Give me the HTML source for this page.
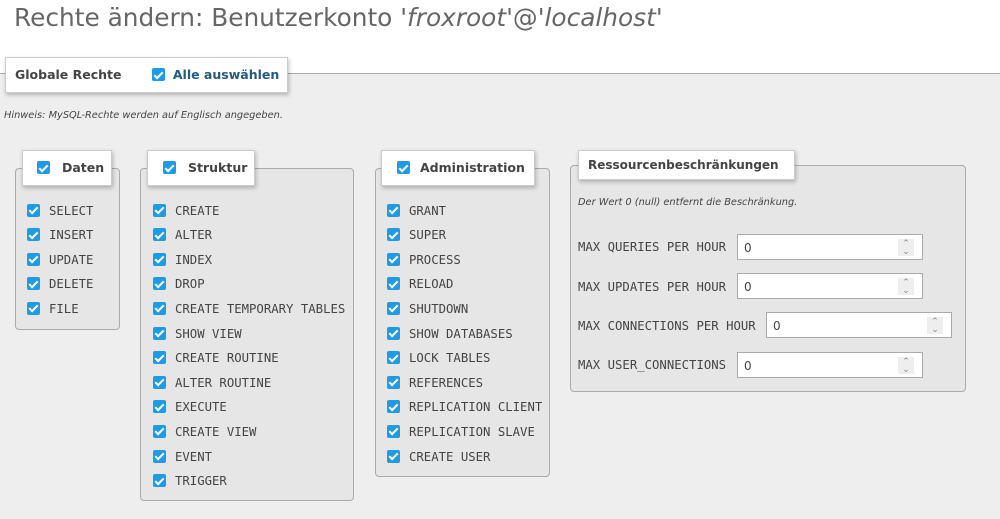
<!DOCTYPE html>
<html><head><meta charset="utf-8"><style>
*{box-sizing:border-box;margin:0;padding:0}
body{width:1000px;height:519px;overflow:hidden;background:#eeeeee;font-family:"DejaVu Sans","Liberation Sans",sans-serif;position:relative;color:#444}
.top{position:absolute;left:0;top:0;width:1000px;height:74px;background:#fff;border-bottom:1px solid #aaa}
h1{position:absolute;left:14px;top:3px;font-weight:normal;font-size:24.8px;color:#666;white-space:nowrap}
.leg{position:absolute;background:#fff;border:1px solid #ccc;box-shadow:1px 2px 4px rgba(0,0,0,.25);font-weight:bold;font-size:12.5px;color:#444;white-space:nowrap}
.cb{display:inline-block;width:13px;height:13px;background:#1e9be2;border-radius:2px;position:relative;vertical-align:middle}
.cb:after{content:"";position:absolute;left:4px;top:1.5px;width:3px;height:7px;border:solid #fff;border-width:0 2px 2px 0;transform:rotate(45deg)}
.fs{position:absolute;border:1px solid #aaa;border-radius:4px;background:#e6e6e6}
.it{position:absolute;font-family:"DejaVu Sans Mono","Liberation Mono",monospace;font-size:12.3px;color:#444;white-space:nowrap}
.it .cb{position:absolute;left:-22px;top:0}
.hint{position:absolute;font-style:italic;font-size:9.8px;color:#444;white-space:nowrap}
.inp{position:absolute;background:#fff;border:1px solid #aaa;height:26px;width:186px;font-size:12px;padding:6px 0 0 6px}
.inp span{position:absolute;right:8px;top:4px;width:16px;height:17px;background:#eee;color:#888;font-size:9px;line-height:8px;text-align:center;padding-top:1px}
</style></head><body>
<div class="top"></div>
<h1>Rechte ändern: Benutzerkonto '<i>froxroot</i>'@'<i>localhost</i>'</h1>
<div class="leg" style="left:5px;top:57px;width:283px;height:36px;padding:9px 0 0 9px">Globale Rechte <span class="cb" style="margin:-2px 8px 0 26px"></span><span style="color:#235a81">Alle auswählen</span></div>
<div class="hint" style="left:4px;top:110px">Hinweis: MySQL-Rechte werden auf Englisch angegeben.</div>

<div class="fs" style="left:15px;top:168px;width:105px;height:162px"></div>
<div class="leg" style="left:22px;top:150px;width:90px;height:36px;padding:9px 0 0 14px"><span class="cb" style="margin:-2px 12px 0 0"></span>Daten</div>

<div class="fs" style="left:140px;top:168px;width:214px;height:333px"></div>
<div class="leg" style="left:147px;top:150px;width:108px;height:36px;padding:9px 0 0 15px"><span class="cb" style="margin:-2px 12px 0 0"></span>Struktur</div>

<div class="fs" style="left:375px;top:168px;width:175px;height:309px"></div>
<div class="leg" style="left:381px;top:150px;width:154px;height:36px;padding:9px 0 0 15px"><span class="cb" style="margin:-2px 10px 0 0"></span>Administration</div>

<div class="fs" style="left:570px;top:165px;width:396px;height:227px"></div>
<div class="leg" style="left:578px;top:150px;width:217px;height:30px;padding:7px 0 0 9px;font-size:12px">Ressourcenbeschränkungen</div>
<div class="hint" style="left:578px;top:197px">Der Wert 0 (null) entfernt die Beschränkung.</div>

<div class="it" style="left:578px;top:240px">MAX QUERIES PER HOUR</div>
<div class="inp" style="left:737px;top:234px">0<span>⌃<br>⌄</span></div>
<div class="it" style="left:578px;top:280px">MAX UPDATES PER HOUR</div>
<div class="inp" style="left:737px;top:273px">0<span>⌃<br>⌄</span></div>
<div class="it" style="left:578px;top:319px">MAX CONNECTIONS PER HOUR</div>
<div class="inp" style="left:766px;top:312px">0<span>⌃<br>⌄</span></div>
<div class="it" style="left:578px;top:358px">MAX USER_CONNECTIONS</div>
<div class="inp" style="left:737px;top:352px">0<span>⌃<br>⌄</span></div>

<div id="c"></div>
<script>
var cols=[[49,["SELECT","INSERT","UPDATE","DELETE","FILE"]],
[175,["CREATE","ALTER","INDEX","DROP","CREATE TEMPORARY TABLES","SHOW VIEW","CREATE ROUTINE","ALTER ROUTINE","EXECUTE","CREATE VIEW","EVENT","TRIGGER"]],
[409,["GRANT","SUPER","PROCESS","RELOAD","SHUTDOWN","SHOW DATABASES","LOCK TABLES","REFERENCES","REPLICATION CLIENT","REPLICATION SLAVE","CREATE USER"]]];
var h="";cols.forEach(function(c){c[1].forEach(function(t,i){h+='<div class="it" style="left:'+c[0]+'px;top:'+(203.5+i*24.6)+'px"><span class="cb"></span>'+t+'</div>';});});
document.getElementById("c").innerHTML=h;
</script>
</body></html>
